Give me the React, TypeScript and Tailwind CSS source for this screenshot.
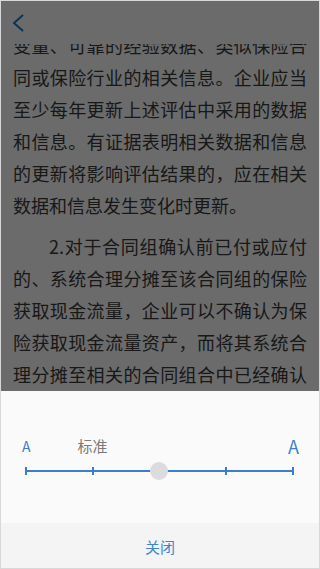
import React from "react";

const font = { fontFamily: '"Noto Sans CJK SC", "Noto Sans", sans-serif' };

function Tick() {
  return <div className="w-[2px] h-[8px] bg-[#3a7fcc]" />;
}

export default function App() {
  return (
    <div
      className="w-[320px] h-[569px] border border-[#d8d8d8] flex flex-col overflow-hidden bg-white"
      style={font}
    >
      <div className="relative h-[390px] overflow-hidden bg-white">
        <div className="px-[12px] pt-[28px] text-[18px] leading-[32px] text-[#3a3a3a] text-justify">
          <p>
            变量、可靠的经验数据、类似保险合同或保险行业的相关信息。企业应当至少每年更新上述评估中采用的数据和信息。有证据表明相关数据和信息的更新将影响评估结果的，应在相关数据和信息发生变化时更新。
          </p>
          <p className="mt-[9px] indent-[36px]">
            2.对于合同组确认前已付或应付的、系统合理分摊至该合同组的保险获取现金流量，企业可以不确认为保险获取现金流量资产，而将其系统合理分摊至相关的合同组合中已经确认的保险获取现金流量资产中。
          </p>
        </div>
        <div className="absolute left-0 top-0 right-0 h-[43px] bg-white flex items-center pl-[11px]">
          <svg width="12" height="18" viewBox="0 0 12 18" fill="none">
            <polyline
              points="10.5,1.5 2,9 10.5,16.5"
              stroke="#2177ca"
              strokeWidth="2"
              strokeLinecap="round"
              strokeLinejoin="round"
            />
          </svg>
        </div>
        <div className="absolute inset-0 bg-black/[0.58]" />
      </div>

      <div className="h-[132px] bg-[#fafafa] flex flex-col">
        <div className="pt-[47px] pl-[21px] pr-[20px] flex items-end leading-[16px]">
          <span className="text-[14px] text-[#3a7fcc]">A</span>
          <span className="ml-[47px] text-[15px] text-[#7a7a7a]">标准</span>
          <span className="ml-auto text-[18px] text-[#3a7fcc]">A</span>
        </div>
        <div className="relative mt-[8px] ml-[24px] w-[269px] h-[18px] flex items-center justify-between">
          <div className="absolute left-0 right-0 top-[8px] h-[2px] bg-[#3a7fcc]" />
          <Tick />
          <Tick />
          <Tick />
          <Tick />
          <Tick />
          <div className="absolute left-[125px] top-0 w-[18px] h-[18px] rounded-full bg-[#dcdcdc]" />
        </div>
      </div>

      <div className="h-[45px] bg-[#f4f4f4] flex items-center justify-center">
        <span className="text-[15px] text-[#3d85d1] pt-[3px]">关闭</span>
      </div>
    </div>
  );
}
